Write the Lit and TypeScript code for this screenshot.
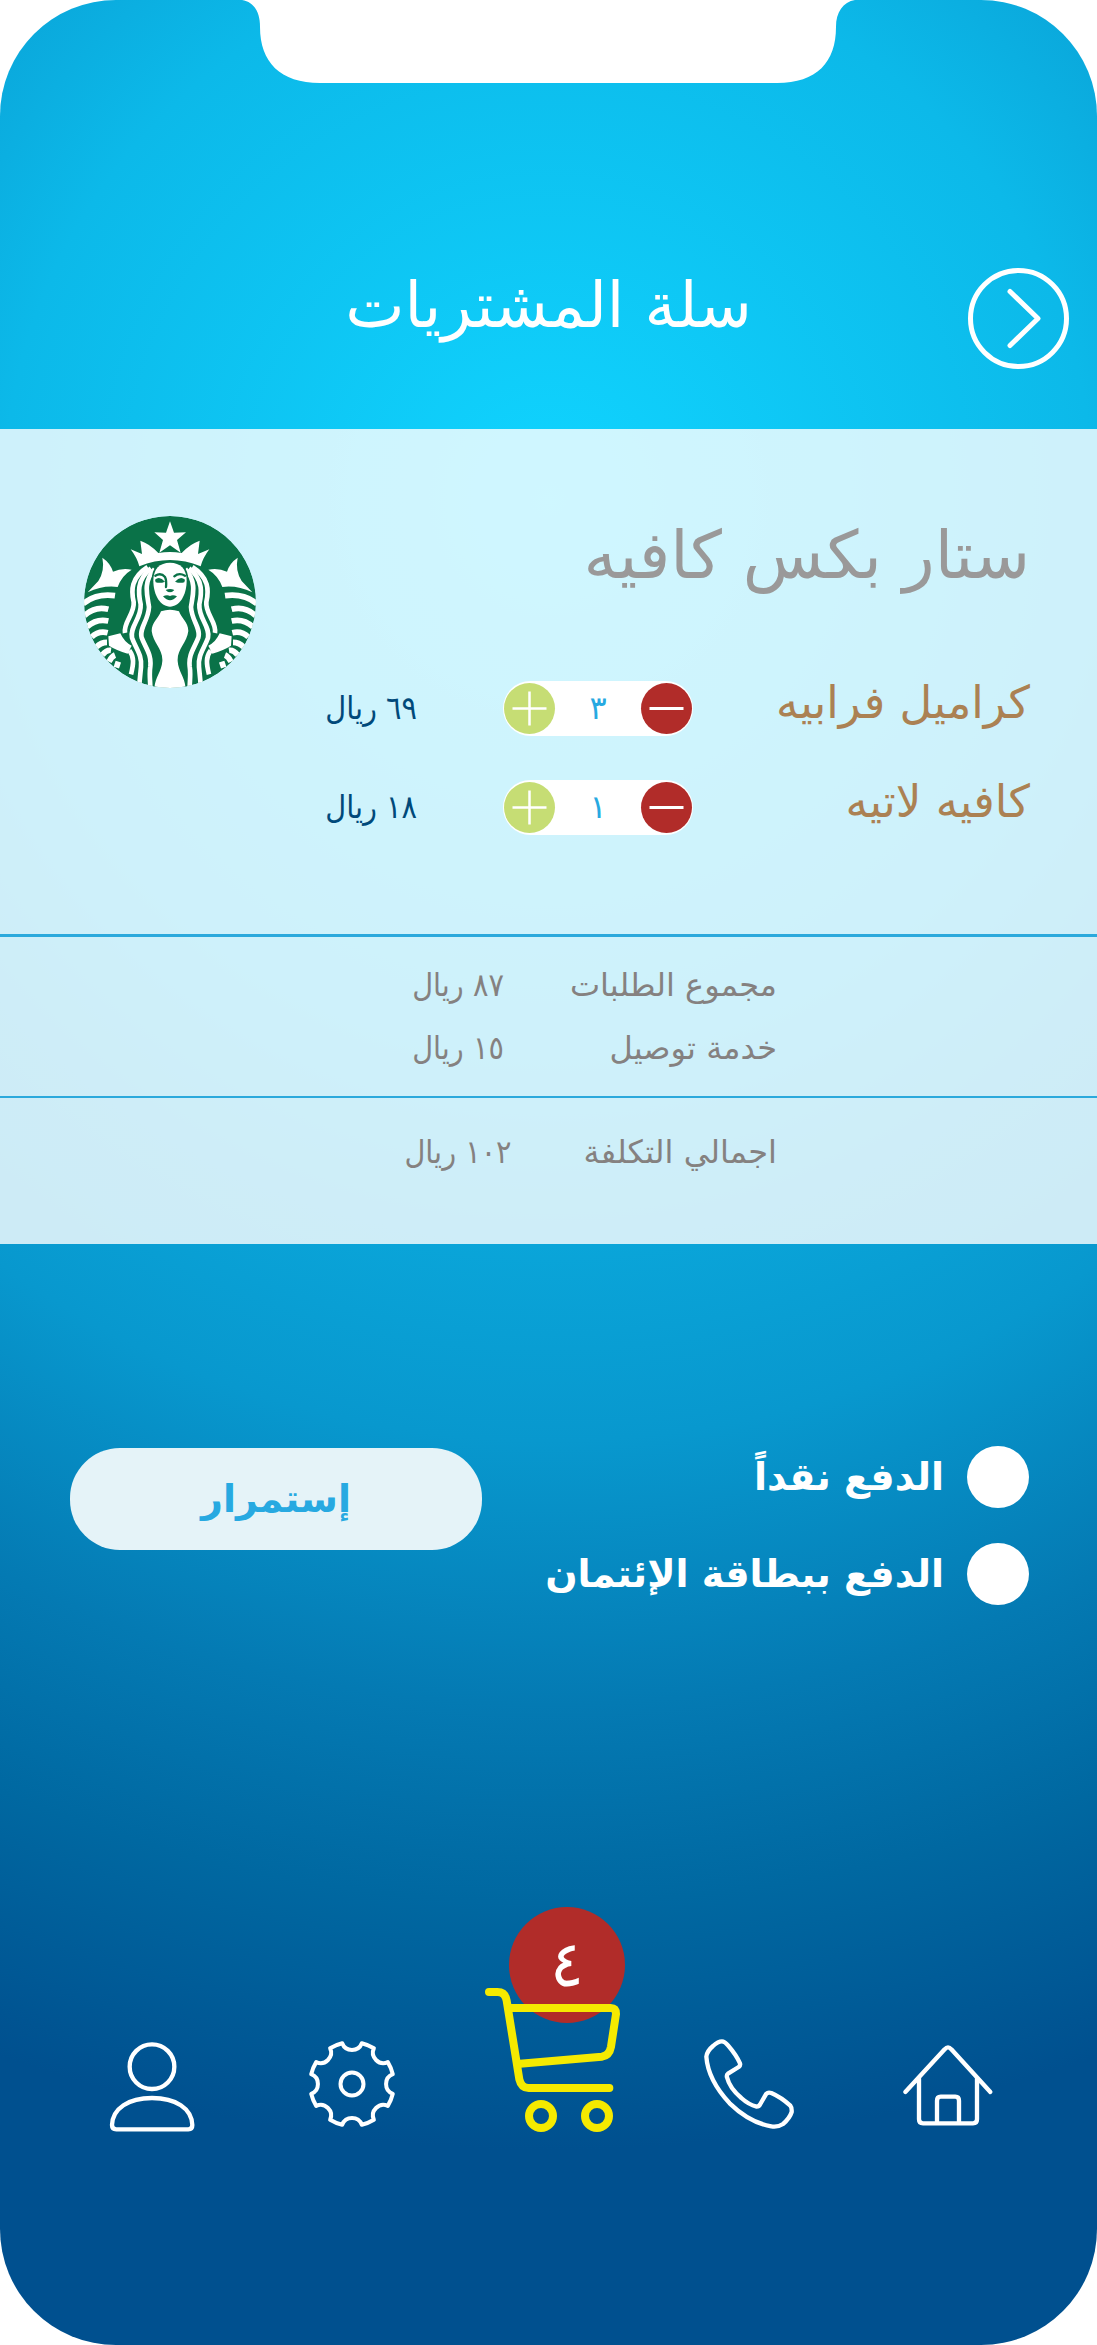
import { LitElement, html, css, svg } from "lit";
import { customElement, property, state } from "lit/decorators.js";

interface CartItem {
  name: string;
  count: number;
  price: number;
}

const arabic = (n: number): string =>
  String(n).replace(/\d/g, (d) => "٠١٢٣٤٥٦٧٨٩"[Number(d)]);

@customElement("quantity-stepper")
class QuantityStepper extends LitElement {
  @property({ type: Number }) value = 1;
  @property() name = "";

  static styles = css`
    :host {
      display: block;
    }
    .pill {
      display: flex;
      align-items: center;
      justify-content: space-between;
      box-sizing: border-box;
      height: 55px;
      padding: 0 1px;
      border-radius: 28px;
      background: #fff;
    }
    .step {
      display: block;
      width: 51px;
      height: 51px;
      padding: 0;
      border: 0;
      border-radius: 50%;
      cursor: pointer;
    }
    .minus {
      background: #b12c29;
    }
    .plus {
      background: #c6dd74;
    }
    .icon {
      display: block;
      width: 51px;
      height: 51px;
      stroke: #fff;
      fill: none;
    }
    .count {
      color: #27a9e1;
      font-size: 32px;
      line-height: 55px;
    }
  `;

  private change(by: number) {
    this.dispatchEvent(new CustomEvent("step", { detail: by }));
  }

  render() {
    return html`
      <div class="pill" role="group" aria-label=${this.name}>
        <button class="step minus" aria-label="إنقاص" @click=${() => this.change(-1)}>
          <svg class="icon" viewBox="0 0 51 51" stroke-width="3"><path d="M8.500 25.500H42.500" /></svg>
        </button>
        <output class="count">${arabic(this.value)}</output>
        <button class="step plus" aria-label="زيادة" @click=${() => this.change(1)}>
          <svg class="icon" viewBox="0 0 51 51" stroke-width="2.500">
            <path d="M8.500 25.500H42.500M25.500 8.500V42.500" />
          </svg>
        </button>
      </div>
    `;
  }
}

const hairAndArm = svg`
  <g class="hair">
    <path d="M262 230C212 262 212 300 220 335C224 370 188 396 194 428" />
    <path d="M272 234C228 268 234 310 241 342C244 384 208 408 215 442C226 474 246 494 242 530L236 592" />
    <path d="M283 236C246 276 262 318 266 350C264 392 236 412 244 442C256 474 274 492 270 528C266 552 270 570 270 596" />
    <path d="M207 480C222 500 220 520 212 552" />
  </g>
  <path d="M82 306L114 272Q134 240 126 202Q150 218 158 244Q184 232 214 238Q184 256 172 290Q128 284 82 306Z" />
  <path d="M144 438L180 429Q192 456 214 466L202 490Q168 480 146 466Z" />
  <g class="scales">
    <path d="M68 340Q108 308 164 316" />
    <path d="M72 376Q104 346 144 357" />
    <path d="M80 410Q108 384 144 392" />
    <path d="M94 440Q114 420 142 427" />
    <path d="M108 470Q122 456 140 456" />
    <path d="M126 494Q138 478 152 480" />
    <path d="M146 514Q154 498 164 494" />
    <path d="M168 532L174 514" />
  </g>
`;

@customElement("cafe-logo")
class CafeLogo extends LitElement {
  static styles = css`
    :host {
      display: block;
    }
    .logo {
      display: block;
      width: 100%;
      fill: #fff;
    }
    .disc {
      fill: #0a7248;
    }
    .hair {
      fill: none;
      stroke: #fff;
      stroke-width: 14;
    }
    .scales {
      fill: none;
      stroke: #fff;
      stroke-width: 17;
    }
    .lines {
      fill: none;
      stroke: #0a7248;
      stroke-width: 7;
      stroke-linecap: round;
    }
    .ink {
      fill: #0a7248;
    }
    .outline {
      stroke: #0a7248;
      stroke-width: 10;
      paint-order: stroke;
    }
  `;

  render() {
    return html`
      <svg class="logo" viewBox="71 77 516 516" role="img" aria-label="شعار المقهى">
        <defs>
          <clipPath id="round"><circle cx="329" cy="335" r="258" /></clipPath>
        </defs>
        <g clip-path="url(#round)">
          <circle class="disc" cx="329" cy="335" r="258" />
          ${hairAndArm}
          <g transform="translate(658 0) scale(-1 1)">${hairAndArm}</g>
          <path d="M329 93L341 127L377 126L350 149L361 187L329 165L297 187L308 149L282 126L317 127Z" />
          <path d="M211 177L245 191L240 151Q268 160 294 188Q329 182 364 188Q390 160 418 151L413 191L447 177Q428 202 421 228Q329 190 237 228Q230 202 211 177Z" />
          <path class="outline" d="M302 363Q329 354 356 363C362 382 384 396 384 422C380 458 350 476 352 512C354 546 376 560 376 600H282C282 560 304 546 306 512C308 476 278 458 274 422C274 396 296 382 302 363Z" />
          <path class="outline" d="M329 217C360 217 379 236 379 270C379 318 356 349 329 349C302 349 279 318 279 270C279 236 298 217 329 217Z" />
          <path class="lines" d="M285 256Q302 246 314 260Q319 270 317 290M374 256Q356 246 342 258" />
          <path class="ink" d="M284 268Q298 256 314 274Q300 280 286 276ZM374 268Q360 256 344 274Q358 280 372 276ZM316 299Q329 293 342 299Q336 307 329 305Q322 307 316 299ZM308 318Q320 312 329 317Q338 312 350 318Q329 342 308 318Z" />
        </g>
      </svg>
    `;
  }
}

@customElement("app-root")
class AppRoot extends LitElement {
  @state() private items: CartItem[] = [
    { name: "كراميل فرابيه", count: 3, price: 23 },
    { name: "كافيه لاتيه", count: 1, price: 18 },
  ];

  private readonly delivery = 15;

  static styles = css`
    :host {
      display: block;
      background: #fff;
      font-family: "DejaVu Sans", sans-serif;
    }
    button,
    input {
      font: inherit;
    }
    .screen {
      display: flex;
      flex-direction: column;
      min-height: 100vh;
      overflow: hidden;
      border-radius: 116px;
      background: radial-gradient(
        circle 1650px at 50% 500px,
        #10d4ff 0%,
        #0cb9e9 33%,
        #0aa5d9 45%,
        #0898ce 57%,
        #047ab3 73%,
        #0068a1 85%,
        #00508f 100%
      );
    }
    .notch {
      display: block;
      width: 100%;
      fill: #fff;
    }
    .header {
      display: grid;
      grid-template-columns: 1fr auto 1fr;
      align-items: start;
      padding: 185px 28px 60px;
    }
    .title {
      grid-column: 2;
      margin: 0;
      color: #fff;
      font-size: 63px;
      font-weight: 400;
      line-height: 76px;
    }
    .back {
      grid-column: 1;
      justify-self: start;
      width: 101px;
      height: 101px;
      padding: 0;
      border: 0;
      background: none;
      cursor: pointer;
    }
    .back-icon {
      display: block;
      width: 101px;
      height: 101px;
      fill: none;
      stroke: #fff;
      stroke-width: 5;
      stroke-linecap: round;
      stroke-linejoin: round;
    }
    .panel {
      background: rgba(255, 255, 255, 0.8);
      color: #858180;
    }
    .order {
      display: grid;
      grid-template-columns: 337fr 190px 247fr 172px;
      grid-template-rows: 121px;
      grid-auto-rows: 55px;
      row-gap: 44px;
      align-items: center;
      padding: 87px 67px 99px 84px;
    }
    .store {
      grid-column: 1 / 4;
      align-self: start;
      margin: 0;
      color: #9a9999;
      font-size: 66px;
      font-weight: 400;
      line-height: 80px;
    }
    .logo {
      grid-column: 4;
      grid-row: 1 / 3;
      align-self: start;
    }
    .item-name {
      grid-column: 1;
      align-self: start;
      color: #ab8153;
      font-size: 45px;
      line-height: 44px;
    }
    .quantity {
      grid-column: 2;
    }
    .item-price {
      grid-column: 3;
      padding-inline-start: 86px;
      color: #00497a;
      font-family: "DejaVu Sans Condensed", "DejaVu Sans", sans-serif;
      font-stretch: condensed;
      font-size: 32px;
      line-height: 55px;
    }
    .summary {
      display: grid;
      grid-template-columns: 320fr 225px 188px 364fr;
      margin: 0;
      padding: 17px 0 16px;
      border-top: 3px solid #2ba9dc;
      font-size: 32px;
      line-height: 63px;
      white-space: nowrap;
    }
    .total {
      padding: 23px 0 60px;
      border-top-width: 2px;
    }
    .label {
      grid-column: 2;
    }
    .amount {
      grid-column: 3;
      margin: 0;
      font-family: "DejaVu Sans Condensed", "DejaVu Sans", sans-serif;
      font-stretch: condensed;
      text-align: center;
    }
    .payment {
      display: flex;
      justify-content: space-between;
      align-items: flex-start;
      margin: 0;
      padding: 202px 68px 0 70px;
    }
    .methods {
      display: grid;
      gap: 35px;
      margin: 0;
      padding: 0;
      border: 0;
    }
    .method {
      display: flex;
      align-items: center;
      gap: 23px;
      color: #fff;
      font-size: 38px;
      font-weight: 700;
      line-height: 62px;
      white-space: nowrap;
    }
    .radio {
      flex: none;
      width: 62px;
      height: 62px;
      margin: 0;
      border-radius: 50%;
      background: #fff;
      appearance: none;
      cursor: pointer;
    }
    .radio:checked {
      border: 18px solid #fff;
      background: #27a9e1;
    }
    .continue {
      width: 412px;
      height: 102px;
      margin-top: 2px;
      padding: 0;
      border: 0;
      border-radius: 50px;
      background: #e5f3f8;
      color: #27a9e1;
      font-size: 38px;
      font-weight: 700;
      cursor: pointer;
    }
    .nav {
      display: grid;
      grid-template-columns: 199fr 199fr 193fr 209fr 191fr;
      align-items: end;
      justify-items: center;
      margin-top: auto;
      padding: 0 50px 213px 56px;
    }
    .link {
      position: relative;
      display: block;
      color: #fff;
      text-decoration: none;
    }
    .icon {
      display: block;
      width: 90px;
      height: 90px;
      overflow: visible;
      fill: none;
      stroke: #fff;
      stroke-width: 13;
      stroke-linecap: round;
      stroke-linejoin: round;
    }
    .gear {
      stroke-width: 4;
    }
    .cart {
      position: relative;
      width: 135px;
      height: 144px;
      stroke: #f5ea00;
      stroke-width: 24;
    }
    .badge {
      position: absolute;
      top: -81px;
      left: 24px;
      width: 116px;
      height: 116px;
      border-radius: 50%;
      background: #b12c29;
      font-size: 63px;
      line-height: 116px;
      text-align: center;
    }
  `;

  private step(index: number, by: number) {
    this.items = this.items.map((item, i) =>
      i === index ? { ...item, count: Math.max(0, item.count + by) } : item
    );
  }

  render() {
    const subtotal = this.items.reduce((sum, i) => sum + i.count * i.price, 0);
    const count = this.items.reduce((sum, i) => sum + i.count, 0);
    return html`
      <main class="screen" dir="rtl" lang="ar">
        <svg class="notch" viewBox="0 0 1097 83" aria-hidden="true">
          <path d="M242 0C254 2 260 12 260 27C260 62 280 83 320 83H777C817 83 836 62 836 27C836 12 843 2 855 0Z" />
        </svg>
        <header class="header">
          <button class="back" aria-label="رجوع">
            <svg class="back-icon" viewBox="0 0 101 101">
              <circle cx="50.500" cy="50.500" r="48" />
              <path d="M42 23.500L70 50.500L42 77.500" />
            </svg>
          </button>
          <h1 class="title">سلة المشتريات</h1>
        </header>

        <div class="panel">
          <section class="order">
            <h2 class="store">ستار بكس كافيه</h2>
            <cafe-logo class="logo"></cafe-logo>
            ${this.items.map(
              (item, i) => html`
                <span class="item-name">${item.name}</span>
                <quantity-stepper
                  class="quantity"
                  .name=${item.name}
                  .value=${item.count}
                  @step=${(e: CustomEvent<number>) => this.step(i, e.detail)}
                ></quantity-stepper>
                <span class="item-price">${arabic(item.count * item.price)} ريال</span>
              `
            )}
          </section>
          <dl class="summary">
            <dt class="label">مجموع الطلبات</dt>
            <dd class="amount">${arabic(subtotal)} ريال</dd>
            <dt class="label">خدمة توصيل</dt>
            <dd class="amount">${arabic(this.delivery)} ريال</dd>
          </dl>
          <dl class="summary total">
            <dt class="label">اجمالي التكلفة</dt>
            <dd class="amount">${arabic(subtotal + this.delivery)} ريال</dd>
          </dl>
        </div>

        <form class="payment" @submit=${(e: Event) => e.preventDefault()}>
          <fieldset class="methods" aria-label="طريقة الدفع">
            <label class="method"><input class="radio" type="radio" name="pay" value="cash" />الدفع نقداً</label>
            <label class="method"><input class="radio" type="radio" name="pay" value="card" />الدفع ببطاقة الإئتمان</label>
          </fieldset>
          <button class="continue" type="submit">إستمرار</button>
        </form>

        <nav class="nav">
          <a class="link" href="#home" aria-label="الرئيسية">
            <svg class="icon" viewBox="725 186 270 270">
              <path d="M732 336L850 208Q860 196 870 208L987 336M773 295V418Q773 430 785 430H935Q947 430 947 418V295M827 428V362Q827 350 838 350H882Q893 350 893 362V428" />
            </svg>
          </a>
          <a class="link" href="#call" aria-label="اتصل بنا">
            <svg class="icon" viewBox="128 186 270 270">
              <path d="M182 184Q190 184 200 196Q225 225 236 250Q238 256 232 261L200 281Q195 285 197 292Q205 325 240 354Q262 374 286 380Q293 380 297 372L315 341Q320 336 330 339Q360 352 387 377Q392 383 391 396Q385 415 365 432Q350 442 330 439Q265 428 205 370Q140 300 135 230Q137 213 155 198Q170 184 182 184Z" />
            </svg>
          </a>
          <a class="link" href="#cart" aria-label="السلة">
            <span class="badge">${arabic(count)}</span>
            <svg class="icon cart" viewBox="75 324 405 432">
              <path d="M87 336H112Q136 336 140 362L178 598Q184 624 206 624H448" />
              <path d="M148 384H452Q468 384 468 402L453 500Q448 527 425 530L180 551" />
              <circle cx="243" cy="708" r="36" />
              <circle cx="411" cy="708" r="36" />
            </svg>
          </a>
          <a class="link" href="#settings" aria-label="الإعدادات">
            <svg class="icon gear" viewBox="-45 -42 90 90">
              <circle r="11.500" />
              <path d="M-9.800 -40.800A10.500 10.500 0 0 0 9.800 -40.800A42 42 0 0 1 21.900 -35.800A10.500 10.500 0 0 0 35.800 -21.900A42 42 0 0 1 40.800 -9.800A10.500 10.500 0 0 0 40.800 9.800A42 42 0 0 1 35.800 21.900A10.500 10.500 0 0 0 21.900 35.800A42 42 0 0 1 9.800 40.800A10.500 10.500 0 0 0 -9.800 40.800A42 42 0 0 1 -21.900 35.800A10.500 10.500 0 0 0 -35.800 21.900A42 42 0 0 1 -40.800 9.800A10.500 10.500 0 0 0 -40.800 -9.800A42 42 0 0 1 -35.800 -21.900A10.500 10.500 0 0 0 -21.900 -35.800A42 42 0 0 1 -9.800 -40.800Z" />
            </svg>
          </a>
          <a class="link" href="#profile" aria-label="حسابي">
            <svg class="icon" viewBox="139 486 270 270">
              <circle cx="274" cy="560" r="67" />
              <path d="M154 735Q154 748 167 748H383Q395 748 395 735C393 685 345 654 274 654C204 654 156 685 154 735Z" />
            </svg>
          </a>
        </nav>
      </main>
    `;
  }
}
